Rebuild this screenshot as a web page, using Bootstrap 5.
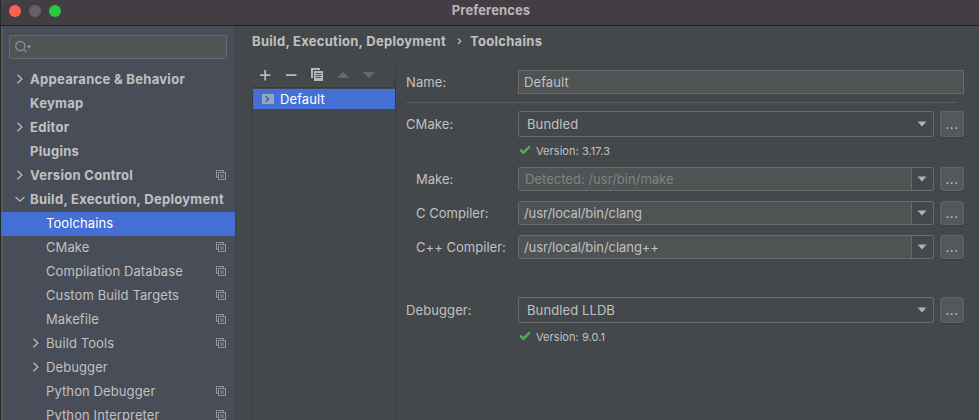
<!DOCTYPE html>
<html lang="en">
<head>
<meta charset="utf-8">
<title>Preferences</title>
<link rel="stylesheet" href="https://cdn.jsdelivr.net/npm/bootstrap@5.3.0/dist/css/bootstrap.min.css">
<style>
body{font-family:Inter,"Liberation Sans",sans-serif;font-size:13px;line-height:16px;color:#c0c1c2;background:#44484a;height:420px;overflow:hidden;letter-spacing:.1px}
.window{height:420px;border-left:1px solid #232b25}
.titlebar{height:26px;background:#423e43;border-bottom:1px solid #202122;border-top-left-radius:8px;color:#b9b6b9;padding-left:8px}
.lights{gap:8px;padding-top:5px}
.titlebar .caption{padding-bottom:5px;padding-left:2px;letter-spacing:.1px}
.dot{width:12px;height:12px;border-radius:50%}
.dot-red{background:#ff5f57}.dot-gray{background:#656168}.dot-green{background:#28c840}
.sidebar{width:235px;background:#494d58;border-right:1px solid #3d4043;box-shadow:inset 2px 0 #55585f}
.search{height:24px;margin:9px 8px 9px 8px;border:1px solid #676b6c;border-radius:2px;background:#4f5454;padding-left:5px}
.tree-item{height:24px;padding:0 9px 2px 14px;flex-shrink:0}
.tree-item.sub{padding-left:30px}
.tree-item .arrow{width:15px}
.tree-item.active{background:#4470d6;color:#fff}
.bold{font-weight:700;letter-spacing:.29px}
.crumbs{height:37px;padding:0 16px 7px 16px}
.pane-list{width:144px;margin-left:16px;border-right:1px solid #393c3e}
.tools{height:25px;border-bottom:1px solid #393c3e;padding-left:1px}
.list-row{height:20px;background:#4470d6;color:#fff;padding-left:9px;border-left:1px solid #393c3e;margin-top:1px}
.list-row span{padding-left:6px}
.list-rest{border-left:1px solid #393c3e}
.form-area{padding:7px 15px 0 10px}
.field{height:24px}
.field.tall{height:26px}
.field.next{margin-top:10px}
.field.last{margin-top:38px}
.field label{width:112px;flex-shrink:0}
.field label.inner{padding-left:10px;letter-spacing:.03px}
.box{border:1px solid #686b6c;background:#4f5353;padding-left:5px}
.combo{border:1px solid #686b6c;border-radius:2px;background:#44484a}
.combo .val{padding-left:8px}
.combo .edit{background:#4f5353;border-right:1px solid #686b6c;padding-left:5px;letter-spacing:-.06px}
.combo .edit.muted{color:#808384;padding-left:6px;letter-spacing:.02px}
.combo .drop{width:21px;padding-right:1px}
.more{width:24px;margin-left:6px;border:1px solid #626668;border-radius:3px;background:#54585a;box-shadow:0 1px 1px #3b3e40;letter-spacing:.6px}
.rule{height:1px;background:#5a5d5f;margin:8px 7px 8px 0}
.status{font-size:11px;height:14px;padding-left:113px;margin:7px 0 9px;letter-spacing:.06px}
.status svg{margin-bottom:3px}
.status span{margin-left:5px}
</style>
</head>
<body>
<svg class="d-none" xmlns="http://www.w3.org/2000/svg">
<symbol id="right" viewBox="0 0 10 10"><path d="M2.500.8 6.800 5 2.500 9.200" fill="none" stroke="#b5b8bc" stroke-width="1.400"/></symbol>
<symbol id="down" viewBox="0 0 10 10"><path d="M.5 3 5 7.200 9.500 3" fill="none" stroke="#b5b8bc" stroke-width="1.300"/></symbol>
<symbol id="copy" viewBox="0 0 10 10"><path d="M2 7.500H.5v-7h7V2M2.500 2.500h7v7h-7zM4.200 5h3.600M4.200 7h3.600" fill="none" stroke="#92979f"/></symbol>
<symbol id="tri" viewBox="0 0 10 6"><path d="M.5.5h9L5 5.500z" fill="#b0b2b4"/></symbol>
<symbol id="check" viewBox="0 0 12 10"><path d="M1.200 4.700 4.300 7.700 10.800 1.300" fill="none" stroke="#4fae55" stroke-width="2.500"/></symbol>
</svg>
<div class="window d-flex flex-column">
  <header class="titlebar d-flex position-relative flex-shrink-0">
    <div class="lights d-flex"><span class="dot dot-red"></span><span class="dot dot-gray"></span><span class="dot dot-green"></span></div>
    <div class="caption bold position-absolute top-0 start-0 w-100 h-100 d-flex align-items-center justify-content-center">Preferences</div>
  </header>
  <div class="d-flex flex-grow-1 overflow-hidden">
    <nav class="sidebar d-flex flex-column flex-shrink-0">
      <div class="search d-flex align-items-center flex-shrink-0"><svg width="18" height="14" viewBox="0 0 18 14" fill="none" stroke="#8e9599" stroke-width="1.200"><circle cx="5.300" cy="6" r="4.600"/><path d="m8.600 9.300 3 3"/><path d="M11.500 5.500h5L14 8.500z" fill="#8e9599" stroke="none"/></svg></div>
      <div class="tree-item bold d-flex align-items-center"><span class="arrow d-flex"><svg width="10" height="10"><use href="#right"/></svg></span><span>Appearance &amp; Behavior</span></div>
      <div class="tree-item bold d-flex align-items-center"><span class="arrow"></span><span>Keymap</span></div>
      <div class="tree-item bold d-flex align-items-center"><span class="arrow d-flex"><svg width="10" height="10"><use href="#right"/></svg></span><span>Editor</span></div>
      <div class="tree-item bold d-flex align-items-center"><span class="arrow"></span><span>Plugins</span></div>
      <div class="tree-item bold d-flex align-items-center"><span class="arrow d-flex"><svg width="10" height="10"><use href="#right"/></svg></span><span>Version Control</span><svg class="ms-auto" width="10" height="10"><use href="#copy"/></svg></div>
      <div class="tree-item bold d-flex align-items-center"><span class="arrow d-flex flex-shrink-0"><svg width="10" height="10"><use href="#down"/></svg></span><span class="text-nowrap">Build, Execution, Deployment</span></div>
      <div class="tree-item sub active d-flex align-items-center"><span class="arrow"></span><span>Toolchains</span></div>
      <div class="tree-item sub d-flex align-items-center"><span class="arrow"></span><span>CMake</span><svg class="ms-auto" width="10" height="10"><use href="#copy"/></svg></div>
      <div class="tree-item sub d-flex align-items-center"><span class="arrow"></span><span>Compilation Database</span><svg class="ms-auto" width="10" height="10"><use href="#copy"/></svg></div>
      <div class="tree-item sub d-flex align-items-center"><span class="arrow"></span><span>Custom Build Targets</span><svg class="ms-auto" width="10" height="10"><use href="#copy"/></svg></div>
      <div class="tree-item sub d-flex align-items-center"><span class="arrow"></span><span>Makefile</span><svg class="ms-auto" width="10" height="10"><use href="#copy"/></svg></div>
      <div class="tree-item sub d-flex align-items-center"><span class="arrow d-flex"><svg width="10" height="10"><use href="#right"/></svg></span><span>Build Tools</span><svg class="ms-auto" width="10" height="10"><use href="#copy"/></svg></div>
      <div class="tree-item sub d-flex align-items-center"><span class="arrow d-flex"><svg width="10" height="10"><use href="#right"/></svg></span><span>Debugger</span></div>
      <div class="tree-item sub d-flex align-items-center"><span class="arrow"></span><span>Python Debugger</span><svg class="ms-auto" width="10" height="10"><use href="#copy"/></svg></div>
      <div class="tree-item sub d-flex align-items-center"><span class="arrow"></span><span>Python Interpreter</span><svg class="ms-auto" width="10" height="10"><use href="#copy"/></svg></div>
    </nav>
    <main class="d-flex flex-column flex-grow-1">
      <div class="crumbs bold d-flex align-items-center"><span>Build, Execution, Deployment</span><svg width="24" height="10" viewBox="0 0 24 10"><path d="m12 2.500 2.700 2.700-2.700 2.700" fill="none" stroke="#c0c1c2" stroke-width="1.200"/></svg><span>Toolchains</span></div>
      <div class="d-flex flex-grow-1">
        <section class="pane-list d-flex flex-column flex-shrink-0">
          <div class="tools d-flex">
            <svg width="142" height="24" viewBox="0 0 142 24"><path d="M7 12.200h10.500M12.200 7v10.500M33 12.200h10.500" stroke="#b7b9ba" stroke-width="1.800"/><path d="M58 5h9v2h-7v8h-2z" fill="#b7b9ba"/><path d="M61 8h9v10h-9z" fill="#b7b9ba"/><path d="M62.500 10.500h6M62.500 12.500h6M62.500 14.500h6" stroke="#55595b"/><path d="m84 15 6-6.200 6 6.200zM110 9h12l-6 6.200z" fill="#67696a"/></svg>
          </div>
          <div class="list-row d-flex align-items-center"><svg width="12" height="10" viewBox="0 0 12 10"><path d="M0 0h12v10H0z" fill="#98a5bb"/><path d="m3.500 2.300 3 2.700-3 2.700" fill="none" stroke="#3563c0" stroke-width="1.500"/></svg><span>Default</span></div>
          <div class="list-rest flex-grow-1"></div>
        </section>
        <section class="form-area flex-grow-1">
          <div class="field d-flex"><label class="align-self-center">Name:</label><div class="box flex-grow-1 d-flex align-items-center">Default</div></div>
          <div class="rule"></div>
          <div class="field tall d-flex"><label class="align-self-center">CMake:</label><div class="combo flex-grow-1 d-flex align-items-center"><span class="val flex-grow-1">Bundled</span><span class="drop d-flex justify-content-center"><svg width="10" height="6"><use href="#tri"/></svg></span></div><div class="more d-flex align-items-center justify-content-center">...</div></div>
          <div class="status d-flex align-items-center"><svg width="12" height="10"><use href="#check"/></svg><span>Version: 3.17.3</span></div>
          <div class="field d-flex"><label class="inner align-self-center">Make:</label><div class="combo flex-grow-1 d-flex"><span class="edit muted flex-grow-1 d-flex align-items-center">Detected: /usr/bin/make</span><span class="drop d-flex align-items-center justify-content-center"><svg width="10" height="6"><use href="#tri"/></svg></span></div><div class="more d-flex align-items-center justify-content-center">...</div></div>
          <div class="field next d-flex"><label class="inner align-self-center">C Compiler:</label><div class="combo flex-grow-1 d-flex"><span class="edit flex-grow-1 d-flex align-items-center">/usr/local/bin/clang</span><span class="drop d-flex align-items-center justify-content-center"><svg width="10" height="6"><use href="#tri"/></svg></span></div><div class="more d-flex align-items-center justify-content-center">...</div></div>
          <div class="field next d-flex"><label class="inner align-self-center">C++ Compiler:</label><div class="combo flex-grow-1 d-flex"><span class="edit flex-grow-1 d-flex align-items-center">/usr/local/bin/clang++</span><span class="drop d-flex align-items-center justify-content-center"><svg width="10" height="6"><use href="#tri"/></svg></span></div><div class="more d-flex align-items-center justify-content-center">...</div></div>
          <div class="field tall last d-flex"><label class="align-self-center">Debugger:</label><div class="combo flex-grow-1 d-flex align-items-center"><span class="val flex-grow-1">Bundled LLDB</span><span class="drop d-flex justify-content-center"><svg width="10" height="6"><use href="#tri"/></svg></span></div><div class="more d-flex align-items-center justify-content-center">...</div></div>
          <div class="status d-flex align-items-center"><svg width="12" height="10"><use href="#check"/></svg><span>Version: 9.0.1</span></div>
        </section>
      </div>
    </main>
  </div>
</div>
<script src="https://cdn.jsdelivr.net/npm/bootstrap@5.3.0/dist/js/bootstrap.bundle.min.js"></script>
</body>
</html>
